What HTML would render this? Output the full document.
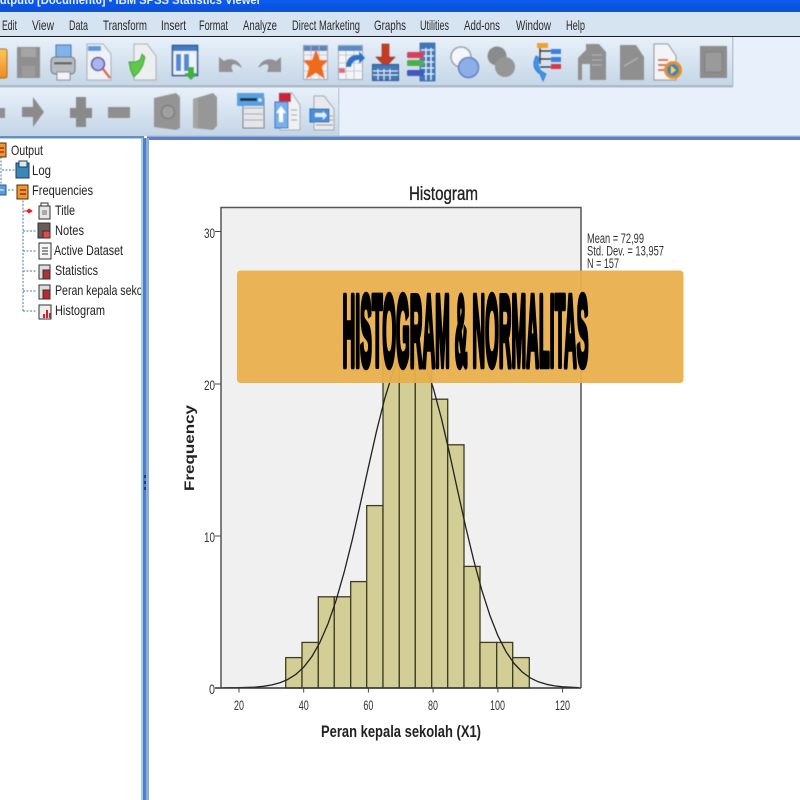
<!DOCTYPE html>
<html><head><meta charset="utf-8"><title>Histogram</title>
<style>html,body{margin:0;padding:0;background:#fff;width:800px;height:800px;overflow:hidden}svg{display:block}text{font-family:"Liberation Sans",sans-serif}</style></head>
<body>
<svg width="800" height="800" viewBox="0 0 800 800" xmlns="http://www.w3.org/2000/svg">
<defs>
<linearGradient id="tb" x1="0" y1="0" x2="0" y2="1"><stop offset="0" stop-color="#e8f1fa"/><stop offset="1" stop-color="#c4d5e6"/></linearGradient>
<linearGradient id="ttl" x1="0" y1="0" x2="0" y2="1"><stop offset="0" stop-color="#0a5cf0"/><stop offset="1" stop-color="#0a4fdc"/></linearGradient>
<linearGradient id="or" x1="0" y1="0" x2="0" y2="1"><stop offset="0" stop-color="#f8c860"/><stop offset="1" stop-color="#f08a20"/></linearGradient>
<filter id="b1"><feGaussianBlur stdDeviation="0.6"/></filter>
<filter id="b2"><feGaussianBlur stdDeviation="0.35"/></filter>
<clipPath id="pane"><rect x="0" y="138" width="141" height="662"/></clipPath>
</defs>
<rect width="800" height="800" fill="#fff"/>
<!-- title bar -->
<rect width="800" height="11" fill="url(#ttl)"/>
<rect y="10" width="800" height="2" fill="#1a55b8"/>
<text x="-9" y="4" font-size="12" font-weight="bold" fill="#e8eefc" textLength="270" lengthAdjust="spacingAndGlyphs" filter="url(#b2)">Output6 [Document6] - IBM SPSS Statistics Viewer</text>
<!-- menu bar -->
<rect y="12" width="800" height="24" fill="#d6e4f1"/>
<rect y="36" width="800" height="1.2" fill="#1c1c20"/>
<g font-size="14" fill="#2c2c2c" filter="url(#b2)">
<text x="2" y="30" textLength="15" lengthAdjust="spacingAndGlyphs">Edit</text>
<text x="32" y="30" textLength="22" lengthAdjust="spacingAndGlyphs">View</text>
<text x="69" y="30" textLength="19" lengthAdjust="spacingAndGlyphs">Data</text>
<text x="103" y="30" textLength="44" lengthAdjust="spacingAndGlyphs">Transform</text>
<text x="161" y="30" textLength="25" lengthAdjust="spacingAndGlyphs">Insert</text>
<text x="199" y="30" textLength="29" lengthAdjust="spacingAndGlyphs">Format</text>
<text x="243" y="30" textLength="34" lengthAdjust="spacingAndGlyphs">Analyze</text>
<text x="292" y="30" textLength="68" lengthAdjust="spacingAndGlyphs">Direct Marketing</text>
<text x="374" y="30" textLength="32" lengthAdjust="spacingAndGlyphs">Graphs</text>
<text x="420" y="30" textLength="29" lengthAdjust="spacingAndGlyphs">Utilities</text>
<text x="464" y="30" textLength="36" lengthAdjust="spacingAndGlyphs">Add-ons</text>
<text x="516" y="30" textLength="35" lengthAdjust="spacingAndGlyphs">Window</text>
<text x="566" y="30" textLength="19" lengthAdjust="spacingAndGlyphs">Help</text>
</g>
<g stroke="#333" stroke-width="1" filter="url(#b2)">
<path d="M2 32h5M32 32h7M69 32h6M103 32h6M161 32h3M211 32h5M243 32h6M320 32h7M374 32h6M420 32h6M484 32h6M516 32h9M566 32h6"/>
</g>
<!-- toolbars -->
<rect y="37" width="800" height="100" fill="#e8f1fb"/>
<rect y="37" width="733" height="50" fill="url(#tb)"/>
<rect y="85" width="733" height="2.500" fill="#aebccb"/>
<rect x="732" y="37" width="1.500" height="50" fill="#b8c7d6"/>
<rect y="88" width="339" height="48" fill="url(#tb)"/>
<rect x="338" y="88" width="1.500" height="48" fill="#c3d0dd"/>
<g filter="url(#b1)">
<!-- folder -->
<rect x="-4" y="49" width="11" height="29" rx="2" fill="url(#or)" stroke="#a86a18"/>
<!-- floppy -->
<rect x="17" y="47" width="23" height="31" fill="#8f8f8f"/><rect x="21" y="48" width="15" height="9" fill="#a5a5a5"/><rect x="22" y="66" width="13" height="11" fill="#9c9c9c"/>
<!-- printer -->
<rect x="56" y="45" width="15" height="13" fill="#7fb4ea" stroke="#4a6ea8"/><rect x="51" y="57" width="24" height="17" rx="4" fill="#b7bcc2" stroke="#6a6e74"/><rect x="54" y="62" width="18" height="2.500" fill="#666"/><rect x="57" y="72" width="13" height="8" fill="#f2f4f6" stroke="#888"/>
<!-- doc magnifier -->
<path d="M87 44h16l8 10v26H87z" fill="#eef1f6" stroke="#a5acb5"/><rect x="88" y="46" width="13" height="5" fill="#5a9ae0"/><circle cx="98" cy="64" r="6.500" fill="#a9b6ee" stroke="#6b4aa0" stroke-width="1.600"/><path d="M103 69l7 9" stroke="#e2603a" stroke-width="2.400"/>
<!-- green doc -->
<path d="M134 44h13l9 12v24h-22z" fill="#eceff0" stroke="#a8acb0"/><path d="M129 62l6 0 5-2 2-6 3 3-2 8-4 7-5 5-3-6z" fill="#5ec94a" stroke="#3a9a30"/>
<!-- dialog blue -->
<rect x="172.500" y="45.500" width="25" height="30" fill="#eef3f8" stroke="#27508e" stroke-width="1.500"/><rect x="173" y="46" width="24" height="5" fill="#3f7cc8"/><rect x="176" y="54" width="5" height="17" fill="#4f8bd0"/><rect x="184" y="54" width="5" height="17" fill="#4f8bd0"/><path d="M188 67h6v6h4l-7 7-7-7h4z" fill="#3fb043"/>
<!-- undo/redo -->
<path d="M219 57v15h14c-3-7-1-9 4-7l5 3c-3-8-11-11-18-7l-5-4z" fill="#929292"/>
<path d="M281 57v15h-14c3-7 1-9-4-7l-5 3c3-8 11-11 18-7l5-4z" fill="#929292"/>
<!-- star grid -->
<rect x="303.500" y="45.500" width="24" height="34" fill="#f0f0f2" stroke="#9aa4b0"/><rect x="304" y="46" width="23" height="5" fill="#5a84c0"/><path d="M303 55h25M303 63h25M303 71h25M311 46v33M319 46v33" stroke="#b9bec8" stroke-width=".8"/><path d="M316 49l4 11h8l-6 7 3 12-9-6-10 6 3-12-6-7h9z" fill="#f06a1c"/>
<!-- grid arrow -->
<rect x="338.500" y="45.500" width="24" height="34" fill="#f4f5f8" stroke="#9aa8b8"/><path d="M338 55h25M338 63h25M338 71h25M346 46v33M354 46v33" stroke="#b2bcc8" stroke-width=".8"/><rect x="338" y="46" width="24" height="5" fill="#5a8ac8"/><rect x="339" y="68" width="6" height="5" fill="#e06a80"/><path d="M346 67c0-9 6-13 13-12v-4l6 7-6 6v-4c-4 0-7 2-8 7z" fill="#2e72c8"/>
<!-- red arrow table -->
<path d="M382 44h7v13h6l-9.500 10-9.500-10h6z" fill="#c43a24" stroke="#8c2a18" stroke-width=".6"/><rect x="372.500" y="64.500" width="26" height="16" fill="#3f78b8" stroke="#27508e"/><path d="M373 71h25M373 75h25M378 69v11M384 69v11M390 69v11" stroke="#dbe8f5" stroke-width="1"/>
<!-- var columns -->
<rect x="420" y="43" width="15" height="38" fill="#3a78bc" stroke="#28508e" stroke-width=".6"/><path d="M421 50h13M421 56h13M421 62h13M421 68h13M421 74h13M426 48v32M431 48v32" stroke="#e4eef8" stroke-width="1.300"/><rect x="407" y="52" width="17" height="6" rx="1.500" fill="#d8405a"/><rect x="407" y="60" width="17" height="6" rx="1.500" fill="#50ae48"/><rect x="407" y="70" width="17" height="6" rx="1.500" fill="#3f58c0"/>
<!-- circles -->
<circle cx="461" cy="57" r="10" fill="#f4f6fa" stroke="#9a9fa8" stroke-width="1.500"/><circle cx="468.500" cy="67.500" r="10" fill="#8eaeea" stroke="#5f80c0" stroke-width="1.500"/>
<circle cx="497" cy="56" r="9.500" fill="#8b8b8b"/><circle cx="505" cy="67" r="10" fill="#969696"/>
<!-- tree -->
<rect x="537" y="43" width="11" height="5" fill="#f0a030"/><path d="M540 48v16M540 51h11M540 59h11M540 67h11" stroke="#222" stroke-width="1.200"/><rect x="551" y="49" width="10" height="5" fill="#3a80dc"/><rect x="551" y="57" width="10" height="5" fill="#3a80dc"/><rect x="551" y="64" width="10" height="5" fill="#d8384a"/><path d="M536 56c-4 8-2 14 4 18l3 7 3-7-5-3c-3-4-4-9-1-13z" fill="#3e96ec" stroke="#2a70c0" stroke-width=".8"/>
<!-- gray docs -->
<path d="M586 44h13l7 8v28h-16V64h-8v16h-4V58l8-8z" fill="#8f8f8f"/><path d="M592 55h10M592 60h10M592 65h10" stroke="#b2b2b2"/>
<path d="M620 45h16l8 12v23h-24z" fill="#8f8f8f"/><path d="M624 66l14-8" stroke="#b0b0b0" stroke-width="1.500"/>
<!-- doc orange -->
<path d="M654 44h14l8 12v24h-22z" fill="#f3f4f6" stroke="#8b8f98"/><path d="M658 60h10M658 65h8M658 70h7" stroke="#d85030" stroke-width="1.800"/><circle cx="673" cy="70" r="7.500" fill="#3a88b0" stroke="#e8901e" stroke-width="3"/><path d="M671 66l5 4-5 4z" fill="#f8d060"/>
<!-- gray square -->
<rect x="700" y="46" width="27" height="32" fill="#8d8d8d"/><rect x="705" y="52" width="17" height="20" fill="#9a9a9a" stroke="#828282"/>
<!-- row 2 -->
<rect x="-6" y="108" width="11" height="10" fill="#8f8f8f"/>
<path d="M22 107h11V97l11 15-11 15v-10H22z" fill="#8b8b8b"/>
<path d="M76 97h10v11h6v10h-6v9H76v-9h-6v-10h6z" fill="#8a8a8a"/>
<rect x="108" y="107" width="22" height="11" fill="#8f8f8f"/>
<path d="M154 98l22-5 4 4v31l-4 2-22-3z" fill="#949494"/><circle cx="168" cy="112" r="6.500" fill="#a0a0a0" stroke="#7f7f7f" stroke-width="1.500"/>
<path d="M193 99l20-6 4 4v29l-4 4-20-2z" fill="#979797"/><rect x="193" y="99" width="5" height="29" fill="#a4a4a4"/>
<!-- dialog 2 -->
<rect x="243" y="98" width="21" height="30" fill="#e4e6ea" stroke="#70757c"/><path d="M244 108h19M244 114h19M244 120h19" stroke="#a0a4aa"/><rect x="237" y="93" width="27" height="13" fill="#58a0e0"/><rect x="240" y="98" width="17" height="3" fill="#14304c"/><circle cx="260" cy="100" r="1.800" fill="#d8e8f8"/>
<!-- doc arrow -->
<path d="M280 93h12l8 12v25h-20z" fill="#f0f1f4" stroke="#a8acb4"/><rect x="279" y="93" width="12" height="9" fill="#c82838"/><rect x="275" y="102" width="13" height="26" fill="#78b0ec" stroke="#2f70c0"/><path d="M281 106l5 7h-3v9h-4v-9h-3z" fill="#fff"/><path d="M291 110h6M291 115h6M291 120h6" stroke="#9aa0a8"/>
<!-- doc 3 -->
<path d="M314 96h10l10 13v21h-20z" fill="#e8eaee" stroke="#a0a4ac"/><rect x="310" y="109" width="19" height="13" fill="#4a90d8" stroke="#2a68b0"/><path d="M315 113h8v-2l4 4.500-4 4.500v-3h-8z" fill="#dff0fc"/><path d="M329 116h4M329 120h4M316 125h17" stroke="#8a8f98"/>
</g>
<!-- dividers -->
<rect y="136" width="144" height="2.500" fill="#5f92c2"/>
<rect x="147" y="136" width="653" height="4" fill="#5f7fbe"/>
<rect x="147" y="135.500" width="653" height="1.200" fill="#a8c0dc"/>
<!-- splitter -->
<rect x="141" y="138" width="2" height="662" fill="#a9cbe0"/>
<rect x="143" y="138" width="3" height="662" fill="#4a82c2"/>
<rect x="146" y="138" width="3" height="662" fill="#8ea8e4"/>
<rect x="144" y="475" width="2" height="3" fill="#1e3f78"/><rect x="144" y="481" width="2" height="3" fill="#1e3f78"/><rect x="144" y="487" width="2" height="3" fill="#1e3f78"/>
<!-- tree pane -->
<g clip-path="url(#pane)" filter="url(#b2)">
<path d="M1 157V188M2 170H15M8 190H15M23 197V311M23 231H37M23 251H37M23 271H37M23 291H37M23 311H37M23 211H30" stroke="#4a78b0" stroke-width="1" stroke-dasharray="2 1.500" fill="none"/>
<rect x="-3" y="185" width="9" height="10" fill="#5a9ad8" stroke="#2a5a9a"/><path d="M-1 190h5" stroke="#fff"/>
<rect x="-4" y="143" width="10" height="14" fill="#e89a30" stroke="#5a2a10"/><path d="M-2 148h6M-2 152h6" stroke="#c8201c" stroke-width="1.500"/>
<rect x="17" y="185" width="11" height="14" fill="#e89a30" stroke="#5a2a10"/><path d="M20 190h6M20 194h6" stroke="#b81c1c" stroke-width="1.500"/>
<path d="M16 163h13v15H16z" fill="#3a88b8" stroke="#1c3c5c"/><rect x="19" y="161" width="8" height="6" fill="#d8eaf4" stroke="#1c3c5c"/>
<path d="M29 209l3 2-3 2-2-2zM24 211h4" fill="#e0202c" stroke="#e0202c"/>
<g stroke="#333" stroke-width="1">
<rect x="39" y="206" width="11" height="13" fill="#e6e6e6"/><path d="M41 203h7v3h-7z" fill="#fff"/><rect x="42" y="210" width="5" height="5" fill="#aaa" stroke="none"/>
<rect x="38" y="223" width="12" height="15" fill="#6a5a5a"/><rect x="43" y="231" width="7" height="7" fill="#e84a4a"/>
<rect x="39" y="243" width="12" height="16" fill="#f6f6f6"/><path d="M42 248h6M42 251h6M42 254h6"/>
<rect x="39" y="265" width="11" height="14" fill="#ddd"/><rect x="43" y="270" width="7" height="9" fill="#b03030"/>
<rect x="39" y="285" width="11" height="14" fill="#ddd"/><rect x="43" y="290" width="7" height="9" fill="#c02828"/>
<rect x="39" y="305" width="12" height="14" fill="#eee"/>
</g>
<path d="M44 318v-4M47 318v-8M50 318v-5" stroke="#d02020" stroke-width="2"/>
<g font-size="14" fill="#222">
<text x="11" y="155" textLength="32" lengthAdjust="spacingAndGlyphs">Output</text>
<text x="32" y="175" textLength="19" lengthAdjust="spacingAndGlyphs">Log</text>
<text x="32" y="195" textLength="61" lengthAdjust="spacingAndGlyphs">Frequencies</text>
<text x="55" y="215" textLength="20" lengthAdjust="spacingAndGlyphs">Title</text>
<text x="55" y="235" textLength="29" lengthAdjust="spacingAndGlyphs">Notes</text>
<text x="54" y="255" textLength="69" lengthAdjust="spacingAndGlyphs">Active Dataset</text>
<text x="55" y="275" textLength="43" lengthAdjust="spacingAndGlyphs">Statistics</text>
<text x="55" y="295" textLength="90" lengthAdjust="spacingAndGlyphs">Peran kepala sekol</text>
<text x="55" y="315" textLength="50" lengthAdjust="spacingAndGlyphs">Histogram</text>
</g>
</g>
<!-- chart -->
<g filter="url(#b2)">
<rect x="221" y="207.500" width="360" height="480.500" fill="#f0f0f0"/>
<g fill="#d2ce96" stroke="#3c3c20" stroke-width="1.300">
<rect x="285.700" y="657.600" width="16.300" height="30.400"/>
<rect x="302" y="642.400" width="16.300" height="45.600"/>
<rect x="318.300" y="596.800" width="16" height="91.200"/>
<rect x="334.300" y="596.800" width="16.400" height="91.200"/>
<rect x="350.700" y="581.600" width="16" height="106.400"/>
<rect x="366.700" y="505.600" width="16.300" height="182.400"/>
<rect x="383" y="292.800" width="16.300" height="395.200"/>
<rect x="399.300" y="353.600" width="16" height="334.400"/>
<rect x="415.300" y="353.600" width="16.400" height="334.400"/>
<rect x="431.700" y="399.200" width="16" height="288.800"/>
<rect x="447.700" y="444.800" width="16.300" height="243.200"/>
<rect x="464" y="566.400" width="16" height="121.600"/>
<rect x="480" y="642.400" width="16.700" height="45.600"/>
<rect x="496.700" y="642.400" width="16" height="45.600"/>
<rect x="512.700" y="657.600" width="16.600" height="30.400"/>
</g>
<polyline fill="none" stroke="#222" stroke-width="1.300" stroke-linejoin="round" points="222.800,687.900 239,687.700 255.200,687.100 263.300,686.300 271.400,685 279.500,682.900 287.500,679.600 295.600,674.600 303.700,667.200 311.800,656.700 319.900,642.400 328,623.800 336.100,600.300 344.200,572.100 352.300,539.700 360.300,504.100 368.400,467.200 376.500,431.300 384.600,399 392.700,372.800 400.800,355.200 410.500,347.500 417,351 425.100,364.800 433.200,387.800 441.300,418 449.400,452.800 457.400,489.600 465.500,526 473.600,559.800 481.700,589.800 489.800,615.100 497.900,635.700 506,651.600 514.100,663.500 522.200,672 530.300,677.900 538.300,681.800 546.400,684.300 554.500,685.900 562.600,686.800 578.800,687.700"/>
<path d="M221 688V207.500H581V688" fill="none" stroke="#555" stroke-width="1.500"/>
<path d="M215 688H581" stroke="#333" stroke-width="1.500"/>
<path d="M215 231.500h6M215 384h6M215 536h6M239 688v4.500M303.700 688v4.500M368.400 688v4.500M433.100 688v4.500M497.900 688v4.500M562.600 688v4.500" stroke="#444" stroke-width="1"/>
<g font-size="14" fill="#333">
<text x="204" y="238" textLength="11" lengthAdjust="spacingAndGlyphs">30</text>
<text x="204" y="390" textLength="11" lengthAdjust="spacingAndGlyphs">20</text>
<text x="204" y="542" textLength="11" lengthAdjust="spacingAndGlyphs">10</text>
<text x="209" y="694" textLength="6" lengthAdjust="spacingAndGlyphs">0</text>
<text x="234" y="710" textLength="10" lengthAdjust="spacingAndGlyphs">20</text>
<text x="298.700" y="710" textLength="10" lengthAdjust="spacingAndGlyphs">40</text>
<text x="363.400" y="710" textLength="10" lengthAdjust="spacingAndGlyphs">60</text>
<text x="428" y="710" textLength="10" lengthAdjust="spacingAndGlyphs">80</text>
<text x="490" y="710" textLength="15" lengthAdjust="spacingAndGlyphs">100</text>
<text x="555" y="710" textLength="15" lengthAdjust="spacingAndGlyphs">120</text>
</g>
<g font-size="13.500" fill="#333">
<text x="587" y="243" textLength="57" lengthAdjust="spacingAndGlyphs">Mean = 72,99</text>
<text x="587" y="255.500" textLength="77" lengthAdjust="spacingAndGlyphs">Std. Dev. = 13,957</text>
<text x="587" y="268" textLength="32" lengthAdjust="spacingAndGlyphs">N = 157</text>
</g>
<text x="409" y="200" font-size="19" fill="#222" stroke="#222" stroke-width=".35" textLength="69" lengthAdjust="spacingAndGlyphs">Histogram</text>
<text x="321" y="737" font-size="16.500" font-weight="bold" fill="#222" textLength="160" lengthAdjust="spacingAndGlyphs">Peran kepala sekolah (X1)</text>
<text transform="translate(194,491) rotate(-90)" font-size="13.500" font-weight="bold" fill="#222" textLength="86" lengthAdjust="spacingAndGlyphs">Frequency</text>
</g>
<!-- banner -->
<rect x="237" y="270.500" width="446.500" height="112.500" rx="3.500" fill="#e9af4c" fill-opacity=".95"/>
<g filter="url(#b2)"><text transform="translate(342.500,365.500) scale(1,2.500)" font-size="40" font-weight="bold" fill="#000" stroke="#000" stroke-width="3" stroke-linejoin="round" textLength="246" lengthAdjust="spacingAndGlyphs">HISTOGRAM &amp; NORMALITAS</text></g>
</svg>
</body></html>
